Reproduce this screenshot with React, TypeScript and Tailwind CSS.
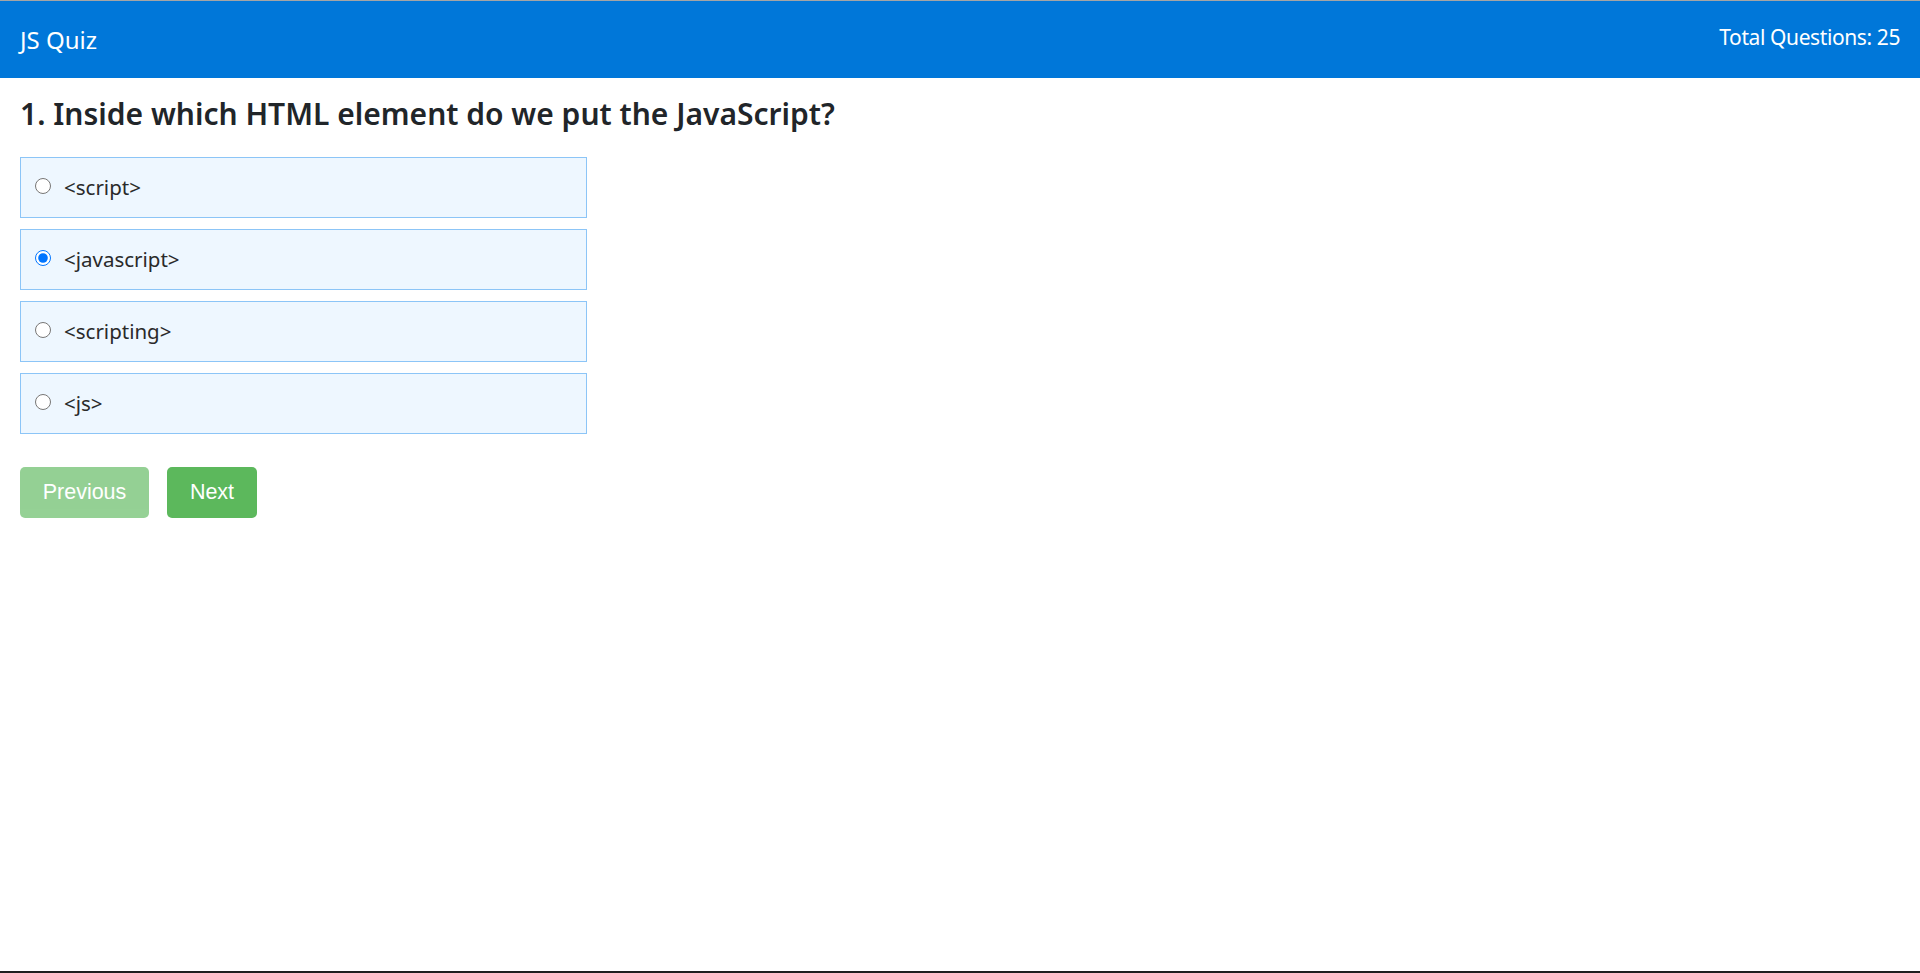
import React, { useState } from "react";

const options = ["<script>", "<javascript>", "<scripting>", "<js>"];

const App = () => {
  const [picked, setPicked] = useState(1);

  return (
    <div className="h-[973px] flex flex-col bg-white border-t border-[#a5a5a5] border-b-2 border-b-[#1f1f1f] font-['Noto_Sans',sans-serif]">
      <header className="h-[77px] shrink-0 bg-[#0077d9] text-white flex items-start justify-between px-5">
        <span className="mt-[27px] text-[24px] leading-none">JS Quiz</span>
        <span className="mt-[26px] text-[21px] leading-none tracking-[-0.4px]">Total Questions: 25</span>
      </header>

      <main className="px-5">
        <h2 className="mt-[21px] text-[30px] leading-none font-semibold text-[#212529]">
          1. Inside which HTML element do we put the JavaScript?
        </h2>

        <div className="mt-[28px] w-[567px] flex flex-col gap-[11px]">
          {options.map((opt, i) => (
            <label
              key={opt}
              className="h-[61px] flex items-center border border-[#8cc5f7] bg-[#eef7ff] pl-[14px] cursor-pointer"
            >
              <input
                type="radio"
                name="q1"
                checked={picked === i}
                onChange={() => setPicked(i)}
                className="w-4 h-4 m-0 mb-[4px] accent-[#0075ff]"
              />
              <span className="ml-[13px] text-[20.5px] leading-none text-[#2a2a2a]">{opt}</span>
            </label>
          ))}
        </div>

        <div className="mt-[33px] flex gap-[18px] font-['Liberation_Sans',Arial,sans-serif]">
          <button className="h-[51px] w-[129px] rounded-[5px] bg-[#5cb85c] opacity-65 text-white text-[21.5px] leading-none">
            Previous
          </button>
          <button className="h-[51px] w-[90px] rounded-[5px] bg-[#5cb85c] text-white text-[21.5px] leading-none">
            Next
          </button>
        </div>
      </main>
    </div>
  );
};

export default App;
